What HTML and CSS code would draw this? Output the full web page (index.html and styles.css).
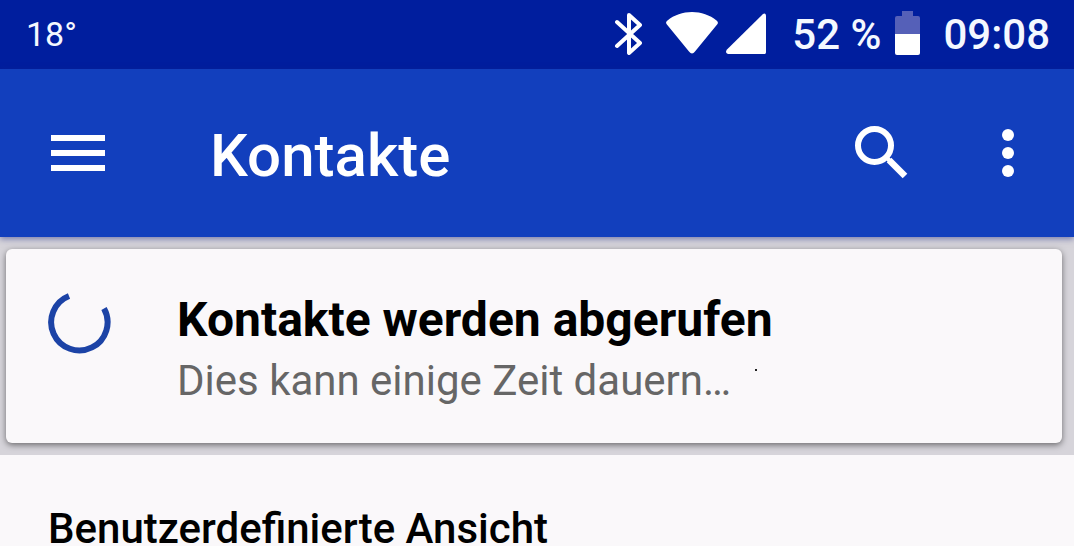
FILE: index.html
```
<!DOCTYPE html>
<html lang="de">
<head>
    <meta charset="UTF-8">
    <meta name="viewport" content="width=device-width, initial-scale=1.0">
    <title>Kontakte</title>
    <link rel="stylesheet" href="styles.css">
</head>
<body>
    <div class="status-bar">
        <span class="temperature">18°</span>
        <div class="status-icons">
            <svg class="bluetooth" width="28" height="44" viewBox="0 0 28 44" fill="none" stroke="#fff" stroke-width="4" stroke-linecap="round" stroke-linejoin="round">
                <path d="M3 11 26 32 15 42V4L26 14 3 35"/>
            </svg>
            <svg class="wifi" width="52" height="42" viewBox="0 0 52 42" fill="#fff">
                <path d="M1.500 8.500C8 3 17 0 26 0s18 3 24.500 8.500c1.800 1.500 1.700 2.500.6 4L29 39.500c-2 2.500-4 2.500-6 0L.9 12.500c-1.200-1.500-1.200-2.500.6-4Z"/>
            </svg>
            <svg class="signal" width="40" height="42" viewBox="0 0 40 42" fill="#fff">
                <path d="M1 37.500 36.500 2.500C38.500.7 40 1.500 40 4v36c0 1.500-.5 2-2 2H2.500C0 42-.8 39.500 1 37.500Z"/>
            </svg>
            <span class="battery-level">52 %</span>
            <svg class="battery" width="25" height="44" viewBox="0 0 25 44">
                <path d="M7 0h11v5h5q2 0 2 2v16H0V7q0-2 2-2h5Z" fill="#5560b8"/>
                <path d="M0 23h25v19q0 2-2 2H2q-2 0-2-2Z" fill="#fff"/>
            </svg>
            <time class="clock">09:08</time>
        </div>
    </div>

    <header class="toolbar">
        <button class="icon-button" type="button" aria-label="Menü">
            <svg width="54" height="36" viewBox="0 0 54 36" fill="#fff">
                <path d="M0 0h54v6H0zM0 15h54v6H0zM0 30h54v6H0z"/>
            </svg>
        </button>
        <h1>Kontakte</h1>
        <button class="icon-button search" type="button" aria-label="Suchen">
            <svg width="54" height="54" viewBox="0 0 54 54" fill="none" stroke="#fff" stroke-width="6">
                <circle cx="19.500" cy="19.500" r="16.500"/>
                <path d="M34 34 50 50" stroke-width="6.500"/>
                <path d="M31 31l4 4" stroke-width="4"/>
            </svg>
        </button>
        <button class="icon-button" type="button" aria-label="Weitere Optionen">
            <svg width="12" height="48" viewBox="0 0 12 48" fill="#fff">
                <circle cx="6" cy="6" r="6"/>
                <circle cx="6" cy="24" r="6"/>
                <circle cx="6" cy="42" r="6"/>
            </svg>
        </button>
    </header>

    <main>
        <div class="card-area">
            <div class="card" role="status">
                <svg class="spinner" width="64" height="64" viewBox="0 0 64 64" fill="none" stroke="#1c43a6" stroke-width="6">
                    <path d="M22 6A28.200 28.200 0 1 0 57 18.500"/>
                </svg>
                <div class="card-text">
                    <h2>Kontakte werden abgerufen</h2>
                    <p>Dies kann einige Zeit dauern…<span class="dot"></span></p>
                </div>
            </div>
        </div>
        <h3 class="section-title">Benutzerdefinierte Ansicht</h3>
    </main>
</body>
</html>
```
FILE: styles.css
```
* {
    margin: 0;
    padding: 0;
    box-sizing: border-box;
}

body {
    background: #faf8fa;
    color: #000;
    font-family: Roboto, "Liberation Sans", sans-serif;
}

svg {
    display: block;
    flex-shrink: 0;
}

.status-bar {
    display: flex;
    justify-content: space-between;
    align-items: center;
    height: 69px;
    padding: 0 24px 3px 26px;
    background: #001e9e;
    color: #f4f8ff;
}

.temperature,
.battery-level,
.clock {
    padding-top: 2px;
}

.temperature {
    font-size: 34px;
}

.status-icons {
    display: flex;
    align-items: center;
    font-size: 42px;
    font-weight: 500;
}

.wifi {
    margin-left: 24px;
}

.signal {
    margin-left: 8px;
}

.battery-level {
    margin-left: 26px;
}

.battery {
    margin-left: 14px;
}

.clock {
    margin-left: 23px;
}

.toolbar {
    position: relative;
    display: flex;
    align-items: center;
    height: 168px;
    padding: 0 60px 0 51px;
    background: #123fbd;
    box-shadow: 0 2px 6px rgba(30, 40, 130, 0.5);
}

.toolbar h1 {
    flex: 1;
    padding-top: 6px;
    margin-left: 105px;
    color: #fff;
    font-size: 60px;
    font-weight: 500;
    line-height: 72px;
}

.icon-button {
    background: none;
    border: none;
    cursor: pointer;
}

.search {
    margin-right: 93px;
}

.card-area {
    padding: 12px 12px 12px 6px;
    background: #d6d4da;
}

.card {
    display: flex;
    gap: 66px;
    padding: 41px 41px 34px;
    border-radius: 6px;
    background: #faf8fa;
    box-shadow: 0 2px 6px rgba(0, 0, 0, 0.5);
}

.card h2 {
    font-size: 48px;
    font-weight: 700;
    line-height: 60px;
}

.card p {
    padding: 7px 0 4px;
    color: #666;
    font-size: 42px;
    line-height: 48px;
}

/* small mark beside the waiting text */
.dot {
    display: inline-block;
    width: 2px;
    height: 2px;
    margin-left: 24px;
    background: #222;
    vertical-align: 24px;
}

.section-title {
    padding: 57px 48px 0;
    font-size: 42px;
    font-weight: 500;
    line-height: 34px;
}
```
